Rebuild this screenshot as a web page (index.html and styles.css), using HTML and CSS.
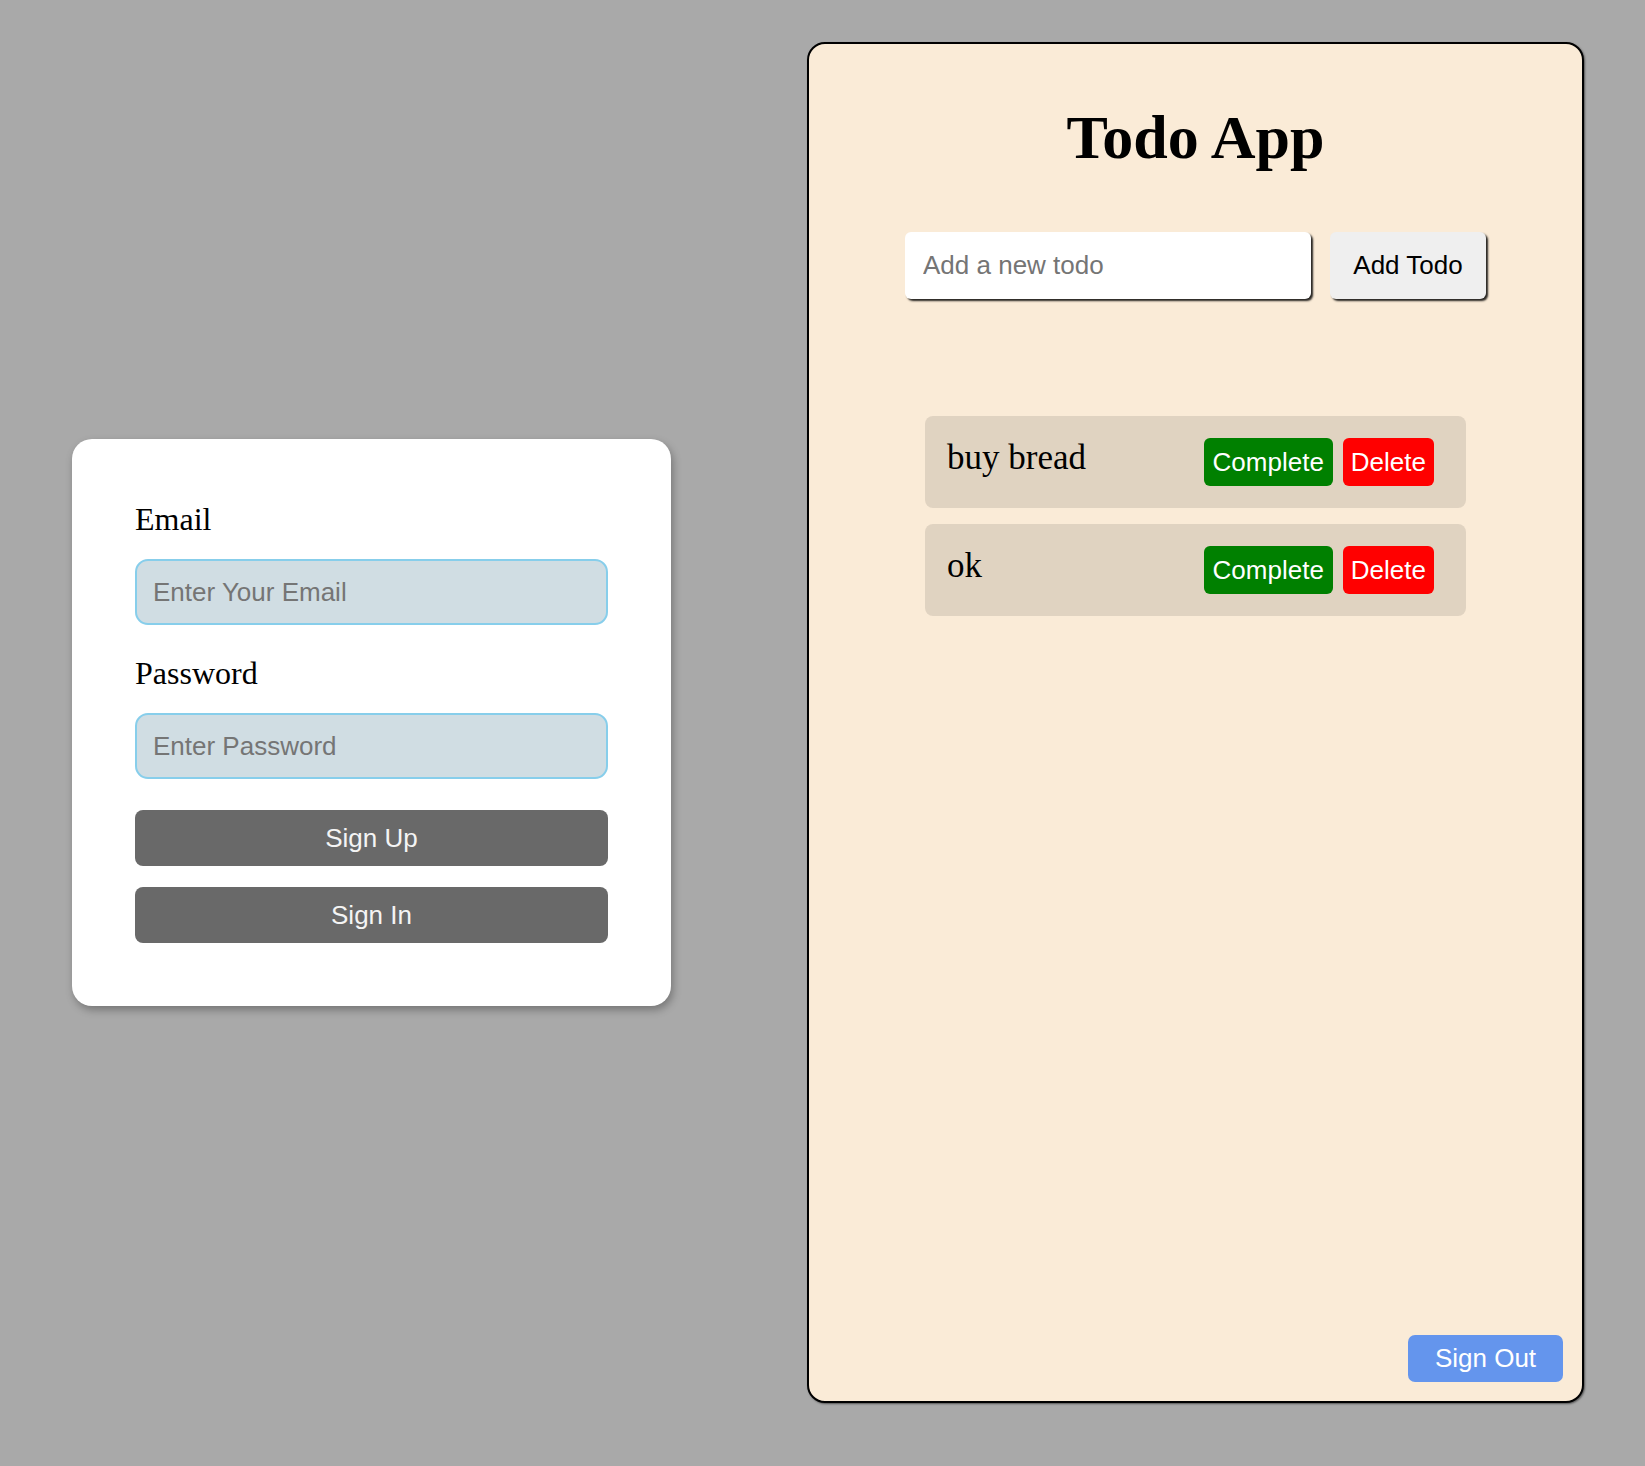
FILE: index.html
```html
<!DOCTYPE html>
<html lang="en">
<head>
<meta charset="utf-8">
<title>Todo App</title>
<link rel="stylesheet" href="styles.css">
</head>
<body>
<div class="page">
  <form class="auth-card">
    <label class="auth-label" for="email">Email</label>
    <input class="auth-input" id="email" type="email" placeholder="Enter Your Email">
    <label class="auth-label" for="password">Password</label>
    <input class="auth-input" id="password" type="password" placeholder="Enter Password">
    <button class="auth-btn" type="button">Sign Up</button>
    <button class="auth-btn" type="button">Sign In</button>
  </form>

  <section class="todo-panel">
    <h1 class="todo-title">Todo App</h1>
    <div class="todo-form">
      <input class="todo-input" type="text" placeholder="Add a new todo">
      <button class="add-btn" type="button">Add Todo</button>
    </div>
    <ul class="todo-list">
      <li class="todo-item">
        <span class="todo-text">buy bread</span>
        <div class="todo-actions">
          <button class="complete-btn" type="button">Complete</button>
          <button class="delete-btn" type="button">Delete</button>
        </div>
      </li>
      <li class="todo-item">
        <span class="todo-text">ok</span>
        <div class="todo-actions">
          <button class="complete-btn" type="button">Complete</button>
          <button class="delete-btn" type="button">Delete</button>
        </div>
      </li>
    </ul>
    <button class="signout-btn" type="button">Sign Out</button>
  </section>
</div>
</body>
</html>
```

FILE: styles.css
```css
html, body {
  margin: 0;
  padding: 0;
  background: #a9a9a9;
}

body {
  font-family: "Liberation Serif", "Times New Roman", serif;
}

.page {
  display: flex;
  align-items: center;
  gap: 136px;
  padding: 42px 0 60px 72px;
}

/* Auth card */
.auth-card {
  box-sizing: border-box;
  width: 599px;
  padding: 63px;
  background: #ffffff;
  border-radius: 20px;
  box-shadow: 2px 4px 8px rgba(0, 0, 0, 0.3);
  display: flex;
  flex-direction: column;
}

.auth-label {
  font-family: "Liberation Serif", "Times New Roman", serif;
  font-size: 32px;
  line-height: 35px;
  color: #000;
  margin-bottom: 22px;
}

.auth-input {
  box-sizing: border-box;
  height: 66px;
  width: 100%;
  margin: 0 0 31px 0;
  padding: 0 16px;
  border: 2px solid #87ceeb;
  border-radius: 13px;
  background: #d0dde3;
  font-family: "Liberation Sans", Arial, sans-serif;
  font-size: 26px;
  color: #000;
  outline: none;
}

.auth-input::placeholder {
  color: #757575;
}

.auth-btn {
  box-sizing: border-box;
  height: 56px;
  width: 100%;
  border: none;
  border-radius: 8px;
  background: #696969;
  color: #f4f4f4;
  font-family: "Liberation Sans", Arial, sans-serif;
  font-size: 26px;
  padding: 0;
}

.auth-btn + .auth-btn {
  margin-top: 21px;
}

/* Todo panel */
.todo-panel {
  box-sizing: border-box;
  width: 777px;
  height: 1361px;
  border: 2px solid #000;
  border-radius: 18px;
  background: #faebd7;
  box-shadow: 1px 1px 2px rgba(0, 0, 0, 0.5);
  display: flex;
  flex-direction: column;
  align-items: center;
  padding: 59px 19px 19px 19px;
}

.todo-title {
  margin: 0;
  font-family: "Liberation Serif", "Times New Roman", serif;
  font-weight: bold;
  font-size: 62px;
  line-height: 68px;
  color: #000;
}

.todo-form {
  display: flex;
  gap: 19px;
  margin-top: 61px;
}

.todo-input {
  box-sizing: border-box;
  width: 406px;
  height: 67px;
  padding: 0 18px;
  border: none;
  border-radius: 6px;
  background: #ffffff;
  box-shadow: 2px 2px 2px rgba(0, 0, 0, 0.85);
  font-family: "Liberation Sans", Arial, sans-serif;
  font-size: 26px;
  color: #000;
  outline: none;
}

.todo-input::placeholder {
  color: #757575;
}

.add-btn {
  box-sizing: border-box;
  width: 156px;
  height: 67px;
  padding: 0;
  border: none;
  border-radius: 6px;
  background: #efefef;
  box-shadow: 2px 2px 2px rgba(0, 0, 0, 0.85);
  font-family: "Liberation Sans", Arial, sans-serif;
  font-size: 26px;
  color: #000;
}

.todo-list {
  list-style: none;
  margin: 117px 0 0 0;
  padding: 0;
  display: flex;
  flex-direction: column;
  gap: 16px;
}

.todo-item {
  box-sizing: border-box;
  width: 541px;
  padding: 22px;
  background: rgba(0, 0, 0, 0.1);
  border-radius: 8px;
  display: flex;
  justify-content: space-between;
  align-items: flex-start;
}

.todo-text {
  font-family: "Liberation Serif", "Times New Roman", serif;
  font-size: 35px;
  line-height: 39px;
  color: #000;
}

.todo-actions {
  display: flex;
}

.complete-btn,
.delete-btn {
  box-sizing: border-box;
  height: 48px;
  padding: 0 9px;
  margin-right: 10px;
  border: none;
  border-radius: 6px;
  color: #ffffff;
  font-family: "Liberation Sans", Arial, sans-serif;
  font-size: 26px;
}

.delete-btn {
  padding: 0 8px;
}

.complete-btn {
  background: #008000;
}

.delete-btn {
  background: #ff0000;
}

.signout-btn {
  margin-top: auto;
  align-self: flex-end;
  box-sizing: border-box;
  width: 155px;
  height: 47px;
  padding: 0;
  border: none;
  border-radius: 7px;
  background: #6495ed;
  color: #ffffff;
  font-family: "Liberation Sans", Arial, sans-serif;
  font-size: 26px;
}
```
